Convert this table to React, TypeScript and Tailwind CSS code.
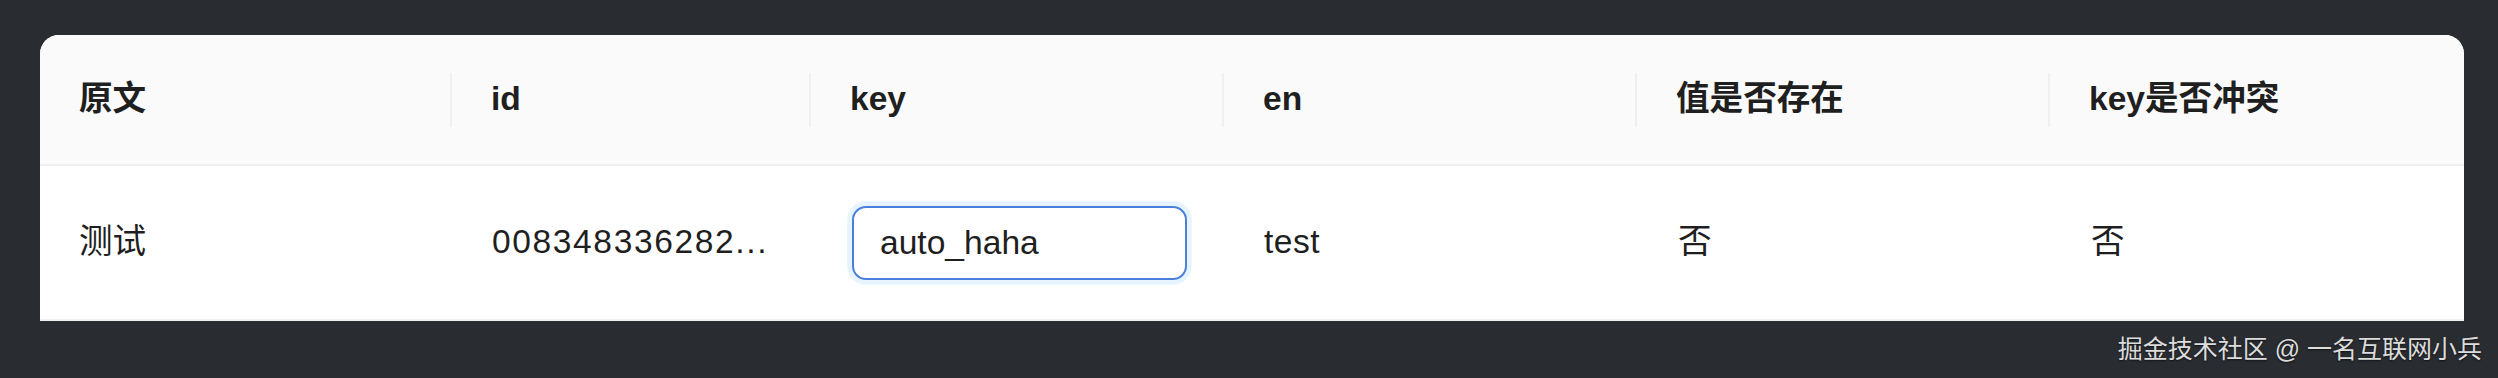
const font = { fontFamily: '"Liberation Sans", "Noto Sans CJK SC", sans-serif' };

const columns = ["原文", "id", "key", "en", "值是否存在", "key是否冲突"];

function HeaderCell({ label, last }: { label: string; last?: boolean }) {
  return (
    <div className="flex items-center">
      <span className="flex-1 pl-[39px] font-semibold">{label}</span>
      {!last && <span className="h-[54px] w-[2.4px] bg-[#f0f0f0]" />}
    </div>
  );
}

export default function App() {
  return (
    <div
      className="h-[378px] w-[2498px] bg-[#292c31] pl-[40px] pt-[35px] text-[33.6px] text-[#1f1f1f]"
      style={font}
    >
      <div className="w-[2424px] overflow-hidden rounded-t-[19px] bg-white">
        <div className="grid h-[131px] grid-cols-[412px_359px_413px_413px_413px_1fr] border-b-[2.4px] border-[#f0f0f0] bg-[#fafafa]">
          {columns.map((c, i) => (
            <HeaderCell key={c} label={c} last={i === columns.length - 1} />
          ))}
        </div>
        <div className="grid h-[155px] grid-cols-[412px_359px_413px_413px_413px_1fr] items-center border-b-[2.4px] border-[#f0f0f0] bg-white">
          <div className="pl-[39px]">测试</div>
          <div className="whitespace-nowrap pl-[40px] tracking-[1.6px]">008348336282...</div>
          <div className="pl-[41px]">
            <input
              defaultValue="auto_haha"
              className="h-[74px] w-[335px] rounded-[14px] border-[2.4px] border-[#4a80dc] bg-white pl-[26px] text-[33.6px] text-[#1f1f1f] shadow-[0_0_0_4.8px_rgba(5,145,255,0.1)] outline-none"
              style={font}
            />
          </div>
          <div className="pl-[40px] tracking-[0.5px]">test</div>
          <div className="pl-[41px]">否</div>
          <div className="pl-[41px]">否</div>
        </div>
      </div>
      <div className="mt-[15px] flex w-[2442px] justify-end">
        <span className="text-[25px] leading-[26px] text-[#dcdcdc] [text-shadow:0_1px_2px_rgba(0,0,0,0.6)]">
          掘金技术社区 @ 一名互联网小兵
        </span>
      </div>
    </div>
  );
}
